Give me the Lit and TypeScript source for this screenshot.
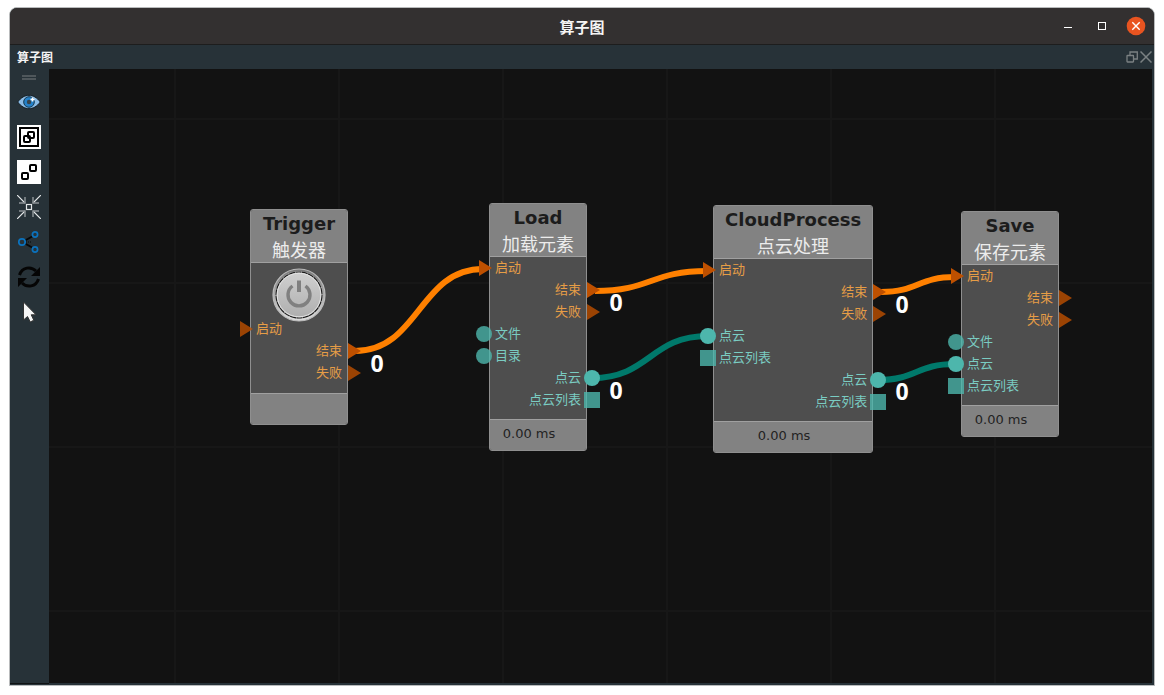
import { LitElement, html, css, svg } from "lit";
import { customElement, property } from "lit/decorators.js";
import { classMap } from "lit/directives/class-map.js";
import { styleMap } from "lit/directives/style-map.js";

type Port = {
  label: string;
  side: "in" | "out";
  shape: "flow" | "data" | "list";
  linked?: boolean;
};

type NodeData = {
  x: number;
  y: number;
  name: string;
  caption: string;
  time?: string;
  power?: boolean;
  ports: Port[];
};

const p = (side: Port["side"], shape: Port["shape"], label: string, linked = false): Port => ({
  side,
  shape,
  label,
  linked,
});

// Positions are canvas coordinates of each node's top-left corner.
const NODES: NodeData[] = [
  {
    x: 201,
    y: 140,
    name: "Trigger",
    caption: "触发器",
    power: true,
    ports: [p("in", "flow", "启动"), p("out", "flow", "结束", true), p("out", "flow", "失败")],
  },
  {
    x: 440,
    y: 134,
    name: "Load",
    caption: "加载元素",
    time: "0.00 ms",
    ports: [
      p("in", "flow", "启动", true),
      p("out", "flow", "结束", true),
      p("out", "flow", "失败"),
      p("in", "data", "文件"),
      p("in", "data", "目录"),
      p("out", "data", "点云", true),
      p("out", "list", "点云列表"),
    ],
  },
  {
    x: 664,
    y: 136,
    name: "CloudProcess",
    caption: "点云处理",
    time: "0.00 ms",
    ports: [
      p("in", "flow", "启动", true),
      p("out", "flow", "结束", true),
      p("out", "flow", "失败"),
      p("in", "data", "点云", true),
      p("in", "list", "点云列表"),
      p("out", "data", "点云", true),
      p("out", "list", "点云列表"),
    ],
  },
  {
    x: 912,
    y: 142,
    name: "Save",
    caption: "保存元素",
    time: "0.00 ms",
    ports: [
      p("in", "flow", "启动", true),
      p("out", "flow", "结束"),
      p("out", "flow", "失败"),
      p("in", "data", "文件"),
      p("in", "data", "点云", true),
      p("in", "list", "点云列表"),
    ],
  },
];

const WIRES = [
  { kind: "flow", from: [306, 282], to: [434, 200] },
  { kind: "flow", from: [546, 222], to: [658, 202] },
  { kind: "flow", from: [832, 223], to: [906, 208] },
  { kind: "data", from: [543, 309], to: [659, 267] },
  { kind: "data", from: [829, 311], to: [906, 295] },
];

const COUNTS = [
  [328, 303],
  [567, 242],
  [853, 244],
  [567, 330],
  [853, 331],
];

const wirePath = ([x1, y1]: number[], [x2, y2]: number[]) => {
  const mid = (x1 + x2) / 2;
  return `M${x1} ${y1} C${mid} ${y1} ${mid} ${y2} ${x2} ${y2}`;
};

@customElement("flow-node")
class FlowNode extends LitElement {
  @property({ attribute: false }) data!: NodeData;

  static styles = css`
    :host {
      display: block;
      box-sizing: border-box;
      min-width: 98px;
      border: 1px solid #8f8f8f;
      border-radius: 3px;
      background: rgba(80, 80, 80, 0.98);
      font-family: "DejaVu Sans", "Noto Sans CJK SC", sans-serif;
    }
    .head {
      padding: 0 11px;
      height: 52px;
      background: #828282;
      border-bottom: 1px solid #a0a0a0;
      text-align: center;
      border-radius: 2px 2px 0 0;
      white-space: nowrap;
    }
    .name {
      margin: 0;
      font-size: 18px;
      font-weight: 700;
      line-height: 28px;
      color: #1c1c1c;
    }
    .caption {
      margin: 0;
      font-family: "Noto Sans CJK SC", sans-serif;
      font-size: 18px;
      line-height: 22px;
      color: #ececec;
    }
    .body {
      padding-bottom: 8px;
    }
    .power {
      display: block;
      width: 54px;
      height: 54px;
      margin: 5px auto -4px;
      padding: 0;
      border: 0;
      background: none;
      cursor: pointer;
    }
    .power + .ports {
      padding-bottom: 1px;
    }
    .power svg {
      display: block;
    }
    .ports {
      list-style: none;
      margin: 0;
      padding: 0;
    }
    .port {
      display: flex;
      align-items: center;
      gap: 3px;
      height: 22px;
      margin: 0 -14px;
      font-family: "Noto Sans CJK SC", sans-serif;
      font-size: 13px;
      line-height: 18px;
      white-space: nowrap;
    }
    .label {
      padding-bottom: 3px;
    }
    .port.out {
      flex-direction: row-reverse;
    }
    .port svg {
      flex: none;
      overflow: visible;
      opacity: 0.8;
    }
    .port.linked svg {
      opacity: 1;
    }
    .flow {
      color: #e69d46;
      fill: #be5000;
    }
    .data,
    .list {
      color: #7accc2;
      fill: #4db6ac;
    }
    .foot {
      box-sizing: border-box;
      height: 31px;
      padding-right: 18px;
      background: #828282;
      border-top: 1px solid #a0a0a0;
      border-radius: 0 0 2px 2px;
      font-size: 13px;
      line-height: 28px;
      text-align: center;
      color: #222;
    }
  `;

  private glyph(shape: Port["shape"]) {
    const marks = {
      flow: svg`<path d="M3 0L16 8L3 16Z"></path>`,
      data: svg`<circle cx="8" cy="8" r="8"></circle>`,
      list: svg`<rect width="16" height="16"></rect>`,
    };
    return html`<svg width="16" height="16" viewBox="0 0 16 16" aria-hidden="true">${marks[shape]}</svg>`;
  }

  render() {
    const d = this.data;
    return html`
      <header class="head">
        <h2 class="name">${d.name}</h2>
        <p class="caption">${d.caption}</p>
      </header>
      <div class="body">
        ${d.power
          ? html`<button class="power" aria-label="触发">
              <svg width="54" height="54" viewBox="0 0 54 54">
                <defs>
                  <linearGradient id="rim" x1="0" y1="0" x2="0" y2="1">
                    <stop offset="0" stop-color="#777"></stop>
                    <stop offset="1" stop-color="#dedede"></stop>
                  </linearGradient>
                  <linearGradient id="face" x1="0" y1="0" x2="0" y2="1">
                    <stop offset="0" stop-color="#d0d0d0"></stop>
                    <stop offset="1" stop-color="#aeaeae"></stop>
                  </linearGradient>
                </defs>
                <circle cx="27" cy="27" r="26" fill="url(#rim)" stroke="#bcbcbc" stroke-width="1.2"></circle>
                <circle cx="27" cy="27" r="23.7" fill="#d8d8d8"></circle>
                <circle cx="27" cy="27" r="23" fill="url(#face)" stroke="#1c1c1c" stroke-width="1.2" stroke-dasharray="6 .5"></circle>
                <circle cx="27" cy="27" r="21.8" fill="none" stroke="#e2e2e2"></circle>
                <path d="M20.500 18A11 11 0 1 0 33.500 18" fill="none" stroke="#808080" stroke-width="3.4"></path>
                <path d="M27 12.500V24" stroke="#808080" stroke-width="4"></path>
              </svg>
            </button>`
          : ""}
        <ul class="ports">
          ${d.ports.map(
            (q) => html`<li class=${classMap({ port: true, [q.side]: true, [q.shape]: true, linked: !!q.linked })}>
              ${this.glyph(q.shape)}<span class="label">${q.label}</span>
            </li>`,
          )}
        </ul>
      </div>
      <footer class="foot">${d.time ?? ""}</footer>
    `;
  }
}

const TOOLS = [
  {
    label: "显示",
    icon: svg`<path d="M.7 12C4 7.500 8 5.300 12 5.300S20 7.500 23.300 12C20 16.500 16 18.700 12 18.700S4 16.500 .7 12Z" fill="#8bbce6" stroke="#151d22" stroke-width="1"></path>
      <circle cx="12" cy="12" r="5.300" fill="#2481c9" stroke="#15384f" stroke-width="1"></circle>
      <circle cx="12" cy="12" r="2.200" fill="#38444b"></circle>
      <path d="M15.500 7.500V11.500M13.500 9.500H17.500" stroke="#fff" stroke-width="1.600"></path>`,
  },
  {
    label: "组合",
    icon: svg`<rect width="24" height="24" fill="#fff"></rect>
      <g fill="none" stroke="#000" stroke-width="2"><rect x="3" y="3" width="18" height="18"></rect>
      <rect x="7" y="11" width="6" height="6" rx="1"></rect><rect x="11" y="7" width="6" height="6" rx="1"></rect></g>`,
  },
  {
    label: "拆分",
    icon: svg`<rect width="24" height="24" fill="#fff"></rect>
      <g fill="none" stroke="#000" stroke-width="2"><rect x="5" y="13" width="6" height="6" rx="1"></rect>
      <rect x="13" y="5" width="6" height="6" rx="1"></rect></g>`,
  },
  {
    label: "居中",
    icon: svg`<g fill="none" stroke="#e3e6e7" stroke-width="1.200"><path d="M0 0L8 8M24 0L16 8M0 24L8 16M24 24L16 16"></path>
      <rect x="9.500" y="9.500" width="5" height="5"></rect></g>
      <path d="M8 2V8H2M16 2V8H22M8 22V16H2M16 22V16H22" fill="none" stroke="#8d9396" stroke-width="1.500"></path>`,
  },
  {
    label: "连接",
    icon: svg`<path d="M8 10.500L16 6M8 13.500L16 18" stroke="#080808" stroke-width="2"></path><path d="M9 12H14" stroke="#080808" stroke-dasharray="1 1"></path>
      <g fill="none" stroke="#0b72bd" stroke-width="1.700"><circle cx="5" cy="12" r="3.200"></circle>
      <circle cx="18" cy="4.500" r="2.600"></circle><circle cx="18" cy="19.500" r="2.600"></circle></g>`,
  },
  {
    label: "刷新",
    icon: svg`<g fill="none" stroke="#050505" stroke-width="3"><path d="M2.500 10C5 2 14 1 19 6"></path><path d="M21.500 14C19 22 10 23 5 18"></path></g>
      <path d="M23 2V11H14ZM1 22V13H10Z" fill="#050505"></path>`,
  },
  {
    label: "选择",
    icon: svg`<path d="M6.500 2V20L10.500 16.500L13.300 22L16.800 20.200L14.200 14.800H19Z" fill="#f5f5f5" stroke="#333" stroke-width="1"></path>`,
  },
];

@customElement("app-root")
class AppRoot extends LitElement {
  static styles = css`
    :host {
      display: flex;
      box-sizing: border-box;
      min-height: 100vh;
      padding: 7px 9px 9px;
      background: #fff;
      font-family: "Noto Sans CJK SC", sans-serif;
    }
    .window {
      flex: 1;
      min-width: 0;
      display: flex;
      flex-direction: column;
      border: 1px solid #b9bbbc;
      border-radius: 8px 8px 0 0;
      background: #273238;
      overflow: hidden;
    }
    button {
      padding: 0;
      border: 0;
      background: none;
      cursor: pointer;
    }
    button svg {
      display: block;
    }
    .titlebar {
      display: grid;
      grid-template-columns: 1fr auto 1fr;
      align-items: center;
      box-sizing: border-box;
      height: 37px;
      padding: 0 8px;
      background: #333030;
      border-bottom: 1px solid #1d1d1d;
    }
    .title {
      grid-column: 2;
      margin: 0;
      font-size: 15px;
      font-weight: 700;
      line-height: 22px;
      padding-top: 2px;
      color: #f4f4f4;
    }
    .controls {
      display: flex;
      justify-content: flex-end;
      gap: 14px;
    }
    .dockbar {
      display: flex;
      align-items: center;
      justify-content: space-between;
      height: 24px;
      padding: 0 2px 0 7px;
    }
    .docktitle {
      margin: 0;
      font-size: 12px;
      font-weight: 700;
      line-height: 18px;
      color: #f4f4f4;
    }
    .dockactions {
      display: flex;
      gap: 2px;
      padding-bottom: 1px;
    }
    .main {
      flex: 1;
      display: flex;
      padding: 0 2px 2px 0;
    }
    .tools {
      display: flex;
      flex-direction: column;
      align-items: center;
      gap: 11px;
      box-sizing: border-box;
      width: 39px;
      padding-right: 1px;
      box-shadow: 0 1px #101314;
    }
    .handle {
      box-sizing: border-box;
      width: 14px;
      height: 5px;
      margin: 6px 0 -1px;
      border: solid #4f575b;
      border-width: 2px 0;
    }
    .canvas {
      position: relative;
      flex: 1;
      overflow: hidden;
      background-color: #121212;
      background-image: linear-gradient(90deg, #171717 2px, transparent 2px),
        linear-gradient(#171717 2px, transparent 2px);
      background-size: 164px 164px;
      background-position: 125px 49px;
    }
    .wires {
      position: absolute;
      inset: 0;
      width: 100%;
      height: 100%;
    }
    .wire {
      fill: none;
      stroke-width: 6;
    }
    .wire.flow {
      stroke: #ff8000;
    }
    .wire.data {
      stroke: #00796b;
    }
    .count {
      fill: #fff;
      font: 700 23px "Noto Sans", sans-serif;
      text-anchor: middle;
    }
    .node {
      position: absolute;
    }
  `;

  render() {
    return html`
      <div class="window">
        <header class="titlebar">
          <h1 class="title">算子图</h1>
          <div class="controls">
            <button aria-label="最小化">
              <svg width="20" height="20"><path d="M6 11.500H14" stroke="#fff"></path></svg>
            </button>
            <button aria-label="最大化">
              <svg width="20" height="20"><rect x="6.500" y="6.500" width="7" height="7" fill="none" stroke="#fff"></rect></svg>
            </button>
            <button aria-label="关闭">
              <svg width="20" height="20">
                <circle cx="10" cy="10" r="9.300" fill="#e95420"></circle>
                <path d="M6.300 6.300L13.700 13.700M13.700 6.300L6.300 13.700" stroke="#fff" stroke-width="1.400"></path>
              </svg>
            </button>
          </div>
        </header>
        <div class="dockbar">
          <h2 class="docktitle">算子图</h2>
          <div class="dockactions">
            <button aria-label="浮动">
              <svg width="12" height="12" fill="none" stroke="#7b8183" stroke-width="1.300">
                <rect x="1" y="4.500" width="6.500" height="6.500" rx=".5"></rect>
                <path d="M4 4.500V1H11.300V8H7.500"></path>
              </svg>
            </button>
            <button aria-label="关闭面板">
              <svg width="12" height="12"><path d="M.5 .5L11.500 11.500M11.500 .5L.5 11.500" stroke="#7b8183" stroke-width="1.500"></path></svg>
            </button>
          </div>
        </div>
        <div class="main">
          <nav class="tools">
            <div class="handle"></div>
            ${TOOLS.map(
              (t) => html`<button aria-label=${t.label}>
                <svg width="24" height="24" viewBox="0 0 24 24">${t.icon}</svg>
              </button>`,
            )}
          </nav>
          <main class="canvas">
            <svg class="wires">
              ${WIRES.map((w) => svg`<path class="wire ${w.kind}" d=${wirePath(w.from, w.to)}></path>`)}
              ${COUNTS.map(([x, y]) => svg`<text class="count" x=${x} y=${y}>0</text>`)}
            </svg>
            ${NODES.map(
              (n) => html`<flow-node
                class="node"
                .data=${n}
                style=${styleMap({ left: `${n.x}px`, top: `${n.y}px` })}
              ></flow-node>`,
            )}
          </main>
        </div>
      </div>
    `;
  }
}
